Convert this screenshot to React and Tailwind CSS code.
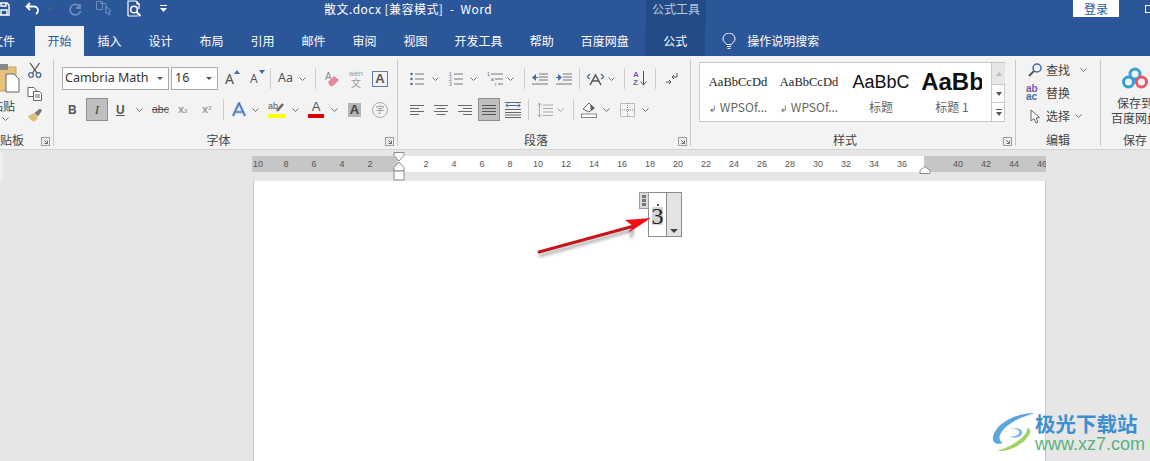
import React from "react";

const CJK = "font-['Noto_Sans_CJK_SC','Noto_Sans',sans-serif]";

const Chev = ({ className = "" }) => (
  <svg width="7" height="4" viewBox="0 0 7 4" className={"shrink-0 " + className} fill="none" stroke="#707070" strokeWidth="1"><path d="M.5.5 3.5 3.5 6.5.5" /></svg>
);
const Sep = ({ className = "" }) => <div className={"w-px h-[21px] bg-[#cfcfcf] shrink-0 " + className} />;
const Launcher = () => (
  <svg width="9" height="9" viewBox="0 0 9 9" className="absolute right-[3px] bottom-[0px]" fill="none" stroke="#6f6f6f"><path d="M.5 8.500V.5h8v8z" stroke="#9a9a9a" /><path d="M3 3l3.500 3.500M6.500 3.500v3h-3" /></svg>
);
const Lines = ({ w = 14, rows, className = "", color = "#6a6a6a" }) => (
  <svg width={w} height="14" viewBox={`0 0 ${w} 14`} className={"shrink-0 " + className} stroke={color} fill="none">
    {rows.map((r, i) => <path key={i} d={`M${r[0]} ${2.5 + i * 3}H${r[1]}`} />)}
  </svg>
);
const Label = ({ children, className = "" }) => (
  <div className={"mt-[12px] h-[13px] flex items-center justify-center text-[12px] leading-none text-[#444] whitespace-nowrap " + className}>{children}</div>
);
const Tab = ({ children, className = "" }) => (
  <div className={"h-full px-[13.5px] flex items-center text-[12px] text-white whitespace-nowrap shrink-0 " + className}>{children}</div>
);

const RULER_MID = [2, 4, 6, 8, 10, 12, 14, 16, 18, 20, 22, 24, 26, 28, 30, 32, 34, 36];

const Cell = ({ n }) => <div className="w-[28px] shrink-0 text-center">{n}</div>;

const StyleItem = ({ preview, name, className = "", arrow }) => (
  <div className={"flex flex-col items-center overflow-hidden shrink-0 " + className}>
    <div className="h-[30px] mt-[4px] flex items-center self-stretch justify-center whitespace-nowrap">{preview}</div>
    <div className="mt-[2px] text-[12px] leading-[16px] text-[#666] whitespace-nowrap">{arrow && <span className="text-[9px] mr-[3px]">↲</span>}{name}</div>
  </div>
);

export default function App() {
  return (
    <div className={"w-[1150px] h-[461px] overflow-hidden bg-[#e6e6e6] relative " + CJK}>
      {/* Title bar */}
      <div className="flex h-[26px] bg-[#2b579a]">
        <div className="w-[646px] flex items-start shrink-0 text-white">
          <svg width="10" height="14" viewBox="0 0 10 14" className="mt-[2px]" fill="none" stroke="#fff" strokeWidth="1.4"><path d="M-2 1h9l2 2v10H-2zM1 13V8h6v5M1 1v3h5V1" /></svg>
          <svg width="15" height="13" viewBox="0 0 15 13" className="ml-[15px] mt-[2px]" fill="none" stroke="#fff" strokeWidth="1.8"><path d="M5 1 1.500 4.500 5 8M2 4.500h7a4 4 0 0 1 4 4c0 1.500-.7 2.500-2 3.500" /></svg>
          <Chev className="ml-[7px] mt-[7px] opacity-80" />
          <svg width="14" height="13" viewBox="0 0 14 13" className="ml-[14px] mt-[3px]" fill="none" stroke="#6f8dbc" strokeWidth="1.8"><path d="M12 1v4H8M12 4A5.300 5.300 0 1 0 12.500 8" /></svg>
          <svg width="17" height="17" viewBox="0 0 17 17" className="ml-[14px] mt-[0px]" fill="none" stroke="#6f8dbc"><path d="M.5 1.500h6v8h-6zM4 3.500h6v7M10 6l5 5-2 .5 1 3-1.500.5-1-3-1.500 1.500z" /></svg>
          <svg width="16" height="17" viewBox="0 0 16 17" className="ml-[14px] mt-[0px]" fill="none" stroke="#fff" strokeWidth="1.2"><path d="M1 16V1h8l3 3v5M10 1v3h3M1 16h10" /><circle cx="7" cy="9.500" r="3.300" strokeWidth="1.500" /><path d="M9.500 12l4 4" strokeWidth="2" /></svg>
          <svg width="7" height="9" viewBox="0 0 7 9" className="ml-[17px] mt-[5px]" fill="#fff"><path d="M0 0h7v1H0zM0 3h7L3.500 7z" /></svg>
          <div className="ml-[157px] mt-[0px] text-[12px] leading-[18px] text-white tracking-[0.45px] whitespace-nowrap">散文.docx [兼容模式]&nbsp; -&nbsp; Word</div>
        </div>
        <div className="w-[60px] bg-[#234b85] text-[12px] leading-[17px] text-[#b9c8df] text-center shrink-0">公式工具</div>
        <div className="flex-1 flex items-start">
          <div className="ml-[367px] w-[46px] h-[17px] bg-white text-[12px] leading-[17px] text-[#2b579a] text-center">登录</div>
          <div className="ml-[26px] mt-[5px] w-[8px] h-[8px] border border-white shrink-0" />
        </div>
      </div>
      {/* Tabs */}
      <div className="flex h-[30px] bg-[#2b579a] items-stretch">
        <div className="-ml-[10px] w-[45px] pr-[20px] h-full flex items-center justify-end text-[12px] text-white whitespace-nowrap shrink-0">文件</div>
        <div className="w-[49px] bg-[#f3f3f3] text-[#2b579a] text-[12px] flex items-center justify-center shrink-0">开始</div>
        <Tab>插入</Tab><Tab>设计</Tab><Tab>布局</Tab><Tab>引用</Tab><Tab>邮件</Tab><Tab>审阅</Tab><Tab>视图</Tab><Tab>开发工具</Tab><Tab>帮助</Tab><Tab>百度网盘</Tab>
        <div className="w-[60px] bg-[#234b85] text-white text-[12px] flex items-center justify-center shrink-0 ml-[3px]">公式</div>
        <svg width="14" height="17" viewBox="0 0 14 17" className="ml-[17px] mt-[7px]" fill="none" stroke="#fff"><path d="M4.500 11.500C3.500 9.500 1 8.500 1 6a6 6 0 0 1 12 0c0 2.500-2.500 3.500-3.500 5.500zM5 13.500h4M5.500 15.500h3" /></svg>
        <div className="ml-[11px] flex items-center text-[12px] text-white whitespace-nowrap">操作说明搜索</div>
      </div>
      {/* Ribbon */}
      <div className="flex h-[94px] pt-[4px] bg-[#f3f3f3] border-b border-[#d4d4d4]">
        {/* Clipboard */}
        <div className="w-[54px] h-[86px] border-r border-[#c8c8c8] shrink-0 relative">
          <div className="flex">
            <div className="w-[25px] shrink-0 overflow-hidden">
              <svg width="20" height="30" viewBox="0 0 20 30" className="mt-[4px]">
                <rect x="-6" y="3" width="22" height="24" fill="#e7c27d" stroke="#c9a35d" />
                <rect x="-1" y="0" width="9" height="6" fill="#8a8a8a" />
                <path d="M6 10h8l5 5v13H6z" fill="#fff" stroke="#666" />
              </svg>
              <div className="-ml-[9px] mt-[4px] text-[12px] leading-[16px] text-[#444] whitespace-nowrap">粘贴</div>
              <Chev className="ml-[2px] mt-[3px]" />
            </div>
            <div className="ml-[2px] flex flex-col">
              <svg width="16" height="16" viewBox="0 0 16 16" className="mt-[2px]" fill="none" stroke="#4f6a8c" strokeWidth="1.300"><circle cx="4" cy="13" r="2.300" /><circle cx="11.500" cy="13" r="2.300" /><path d="M3 1l7 10M12.500 1l-7 10" stroke="#555" /></svg>
              <svg width="16" height="14" viewBox="0 0 16 14" className="mt-[9px]" fill="#fff" stroke="#666"><path d="M1 .5h6l2 2v7H1z" /><path d="M6.500 4.500h6l2 2v7h-8z" /><path d="M8 8h5M8 10h5" /></svg>
              <svg width="16" height="15" viewBox="0 0 16 15" className="mt-[7px]"><path d="M1 8 7 5l4 5-4 4c-2-1-5-3-6-6z" fill="#e2bd78" /><path d="M7.500 5 13 .5l2 2-4 6z" fill="#777" /></svg>
            </div>
          </div>
          <div className="absolute left-0 bottom-0 text-[12px] leading-[13px] text-[#444] h-[13px] w-[24px] whitespace-nowrap">贴板</div>
          <Launcher />
        </div>
        {/* Font */}
        <div className="w-[344px] h-[86px] border-r border-[#c8c8c8] shrink-0 relative pt-[7px]">
          <div className="flex items-center h-[23px]">
            <div className="ml-[8px] w-[107px] h-[23px] bg-white border border-[#ababab] flex items-center pl-[2px] pr-[5px] justify-between font-['Noto_Sans',sans-serif] text-[12.500px] text-[#333] shrink-0">
              <span className="whitespace-nowrap">Cambria Math</span>
              <svg width="6" height="4" viewBox="0 0 6 4" fill="#555"><path d="M0 0h6L3 3z" /></svg>
            </div>
            <div className="ml-[2px] w-[47px] h-[23px] bg-white border border-[#ababab] flex items-center pl-[3px] pr-[5px] justify-between font-['Noto_Sans',sans-serif] text-[12.500px] text-[#333] shrink-0">
              <span>16</span>
              <svg width="6" height="4" viewBox="0 0 6 4" fill="#555"><path d="M0 0h6L3 3z" /></svg>
            </div>
            <div className="ml-[7px] w-[15px] text-[14px] leading-none text-[#555] relative font-['Noto_Sans',sans-serif] shrink-0">A<span className="absolute right-0 -top-[2px] w-0 h-0 border-x-[3px] border-x-transparent border-b-[4px] border-b-[#3f6cab]" /></div>
            <div className="ml-[10px] w-[15px] text-[12px] leading-none text-[#555] relative font-['Noto_Sans',sans-serif] shrink-0">A<span className="absolute right-0 -top-[3px] w-0 h-0 border-x-[3px] border-x-transparent border-t-[4px] border-t-[#3f6cab]" /></div>
            <Sep className="ml-[5px]" />
            <div className="ml-[7px] w-[17px] text-[12.500px] leading-none text-[#555] font-['Noto_Sans',sans-serif] shrink-0">Aa</div>
            <Chev className="ml-[4px]" />
            <Sep className="ml-[9px]" />
            <svg width="15" height="16" viewBox="0 0 15 16" className="ml-[9px] shrink-0"><text x="0" y="9" fontSize="10" fill="#8a8a8a" fontFamily="Liberation Sans">A</text><path d="M3 11l6-6 5 4-6 6H5z" fill="#e58a9c" /></svg>
            <div className="ml-[7px] w-[18px] text-center text-[#9a9a9a] shrink-0 flex flex-col items-center"><span className="text-[7.500px] leading-[8px] font-['Liberation_Sans']">wén</span><span className="text-[10px] leading-[10px]">文</span></div>
            <div className="ml-[7px] w-[16px] h-[16px] border border-[#5b7da8] text-[13px] leading-[14px] text-center font-bold text-[#555] font-['Liberation_Sans'] shrink-0">A</div>
          </div>
          <div className="flex items-center h-[23px] mt-[8px] text-[#555]">
            <div className="ml-[14px] w-[8px] text-[12px] font-bold font-['Liberation_Sans'] leading-none shrink-0">B</div>
            <div className="ml-[10px] w-[22px] h-[23px] bg-[#bfbfbf] border border-[#8f8f8f] flex items-center justify-center text-[13px] italic font-['Liberation_Serif'] shrink-0 text-[#444]">I</div>
            <div className="ml-[8px] w-[9px] text-[12px] font-bold font-['Liberation_Sans'] leading-none underline shrink-0">U</div>
            <Chev className="ml-[11px]" />
            <div className="ml-[9px] w-[16px] text-[10.500px] font-['Liberation_Sans'] leading-none line-through shrink-0">abc</div>
            <div className="ml-[10px] w-[12px] text-[11px] font-bold text-[#9c9c9c] font-['Liberation_Sans'] leading-none shrink-0">x<span className="text-[6px]">2</span></div>
            <div className="ml-[12px] w-[12px] text-[11px] font-bold text-[#9c9c9c] font-['Liberation_Sans'] leading-none shrink-0">x<sup className="text-[6px]">2</sup></div>
            <Sep className="ml-[9px]" />
            <svg width="14" height="15" viewBox="0 0 14 15" className="ml-[8px] shrink-0" fill="none"><path d="M1 14 7 1l6 13M3.500 10h7" stroke="#a9c7e8" strokeWidth="3" /><path d="M1 14 7 1l6 13M3.500 10h7" stroke="#3f6cab" strokeWidth="1.200" /></svg>
            <Chev className="ml-[6px]" />
            <svg width="17" height="17" viewBox="0 0 17 17" className="ml-[9px] shrink-0"><text x="0" y="8" fontSize="9" fill="#555" fontFamily="Liberation Sans">ab</text><path d="M9 10l6-7" stroke="#666" strokeWidth="2.500" /><rect y="13" width="17" height="4" fill="#ffff00" /></svg>
            <Chev className="ml-[7px]" />
            <div className="ml-[9px] w-[16px] flex flex-col items-center shrink-0"><span className="text-[13px] leading-[12px] font-['Liberation_Sans']">A</span><span className="block mt-[1px] w-[16px] h-[4px] bg-[#d00]" /></div>
            <Chev className="ml-[7px]" />
            <div className="ml-[10px] w-[13px] h-[14px] bg-[#b5b5b5] text-[13px] leading-[14px] text-center font-bold font-['Liberation_Sans'] shrink-0 text-[#444]">A</div>
            <div className="ml-[11px] w-[16px] h-[16px] rounded-full border border-[#aaa] text-[9px] leading-[14px] text-center text-[#999] shrink-0">字</div>
          </div>
          <Label className="pr-[14px]">字体</Label>
          <Launcher />
        </div>
        {/* Paragraph */}
        <div className="w-[293px] h-[86px] border-r border-[#c8c8c8] shrink-0 relative pt-[7px]">
          <div className="flex items-center h-[23px]">
            <svg width="14" height="14" viewBox="0 0 14 14" className="ml-[12px] shrink-0"><g fill="#4b6f9f"><circle cx="1.500" cy="2" r="1.300" /><circle cx="1.500" cy="7" r="1.300" /><circle cx="1.500" cy="12" r="1.300" /></g><path d="M5 2h9M5 7h9M5 12h9" stroke="#777" /></svg>
            <Chev className="ml-[8px]" />
            <svg width="14" height="14" viewBox="0 0 14 14" className="ml-[10px] shrink-0"><g fill="#4b6f9f" fontSize="5" fontFamily="Liberation Sans"><text x="0" y="4">1</text><text x="0" y="9">2</text><text x="0" y="14">3</text></g><path d="M5 2h9M5 7h9M5 12h9" stroke="#777" /></svg>
            <Chev className="ml-[7px]" />
            <svg width="16" height="14" viewBox="0 0 16 14" className="ml-[10px] shrink-0"><g fill="#4b6f9f" fontSize="5" fontFamily="Liberation Sans"><text x="0" y="4">1</text><text x="4" y="9">a</text><text x="8" y="14">i</text></g><path d="M4 2h12M8 7h8M11 12h5" stroke="#777" /></svg>
            <Chev className="ml-[4px]" />
            <Sep className="ml-[10px]" />
            <svg width="16" height="12" viewBox="0 0 16 12" className="ml-[7px] shrink-0"><path d="M7 1h9M7 4h9M7 7h9M0 11h16" stroke="#777" /><path d="M0 4.500 4 1v7z" fill="#3f6cab" /><path d="M3 4h3v1H3z" fill="#3f6cab" /></svg>
            <svg width="16" height="12" viewBox="0 0 16 12" className="ml-[8px] shrink-0"><path d="M7 1h9M7 4h9M7 7h9M0 11h16" stroke="#777" /><path d="M6 4.500 2 1v7z" fill="#3f6cab" /><path d="M0 4h3v1H0z" fill="#3f6cab" /></svg>
            <Sep className="ml-[7px]" />
            <svg width="19" height="14" viewBox="0 0 19 14" className="ml-[6px] shrink-0" fill="none"><path d="M4 13 9.500 3 15 13M6 9h7" stroke="#555" strokeWidth="1.500" /><path d="M1 5l3-3M1 5l3 2M18 5l-3-3M18 5l-3 2" stroke="#3f6cab" strokeWidth="1.200" /></svg>
            <Chev className="ml-[3px]" />
            <Sep className="ml-[9px]" />
            <div className="ml-[8px] w-[15px] flex items-center shrink-0">
              <div className="flex flex-col text-[8px] leading-[8px] font-bold text-[#7a5aa8] font-['Liberation_Sans']"><span>A</span><span>Z</span></div>
              <svg width="7" height="15" viewBox="0 0 7 15" className="ml-[1px]" fill="none" stroke="#555"><path d="M3.500 0v14M.5 10.500l3 3.500 3-3.500" /></svg>
            </div>
            <Sep className="ml-[7px]" />
            <svg width="13" height="13" viewBox="0 0 13 13" className="ml-[9px] shrink-0" fill="none" stroke="#555"><path d="M12 1v4H7M7 5l2-2M7 5l2 2" /><path d="M1 10h5M4 8l2 2-2 2" /></svg>
          </div>
          <div className="flex items-center h-[23px] mt-[8px]">
            <Lines rows={[[0, 14], [0, 9], [0, 14], [0, 9]]} className="ml-[12px]" />
            <Lines rows={[[0, 14], [2.5, 11.5], [0, 14], [2.5, 11.5]]} className="ml-[10px]" />
            <Lines rows={[[0, 14], [5, 14], [0, 14], [5, 14]]} className="ml-[10px]" />
            <div className="ml-[6px] w-[22px] h-[23px] bg-[#bfbfbf] border border-[#8f8f8f] flex items-center justify-center shrink-0"><Lines w={14} rows={[[0, 14], [0, 14], [0, 14], [0, 14]]} color="#555" /></div>
            <svg width="16" height="16" viewBox="0 0 16 16" className="ml-[5px] shrink-0" fill="none"><path d="M0 .5h16M0 15.500h16M0 13h16M0 10.500h16M0 7.500h16" stroke="#666" /><path d="M1 3.500h14" stroke="#3f6cab" /><path d="M3 1.500 1 3.500l2 2M13 1.500l2 2-2 2" stroke="#3f6cab" /></svg>
            <Sep className="ml-[7px]" />
            <svg width="16" height="16" viewBox="0 0 16 16" className="ml-[8px] shrink-0" fill="none" stroke="#aaa"><path d="M6 3h10M6 6.500h10M6 10h10M6 13.500h10M2.500 1v14M.5 3.500l2-2.500 2 2.500M.5 12.500l2 2.500 2-2.500" /></svg>
            <Chev className="ml-[4px] opacity-60" />
            <Sep className="ml-[9px]" />
            <svg width="16" height="17" viewBox="0 0 16 17" className="ml-[7px] shrink-0" fill="none"><path d="M2 8l6-6 5 5-5 4z" stroke="#666" fill="#fff" /><path d="M9 3l5 4-4 3" fill="#5d5d5d" /><rect x=".5" y="13" width="15" height="3.500" stroke="#888" fill="#fff" /></svg>
            <Chev className="ml-[6px]" />
            <svg width="15" height="14" viewBox="0 0 15 14" className="ml-[10px] shrink-0" fill="none" stroke="#888" strokeDasharray="1 1"><rect x=".5" y=".5" width="14" height="13" /><path d="M7.500 0v14M0 7h15" /></svg>
            <Chev className="ml-[7px]" />
          </div>
          <Label className="pr-[16px]">段落</Label>
          <Launcher />
        </div>
        {/* Styles */}
        <div className="w-[325px] h-[86px] border-r border-[#c8c8c8] shrink-0 relative pt-[2px]">
          <div className="ml-[8px] w-[306px] h-[60px] bg-white border border-[#c9c9c9] flex">
            <div className="w-[291px] flex overflow-hidden pl-[8px] shrink-0">
              <StyleItem className="w-[60px]" arrow name="WPSOf..." preview={<span className="font-['Liberation_Serif'] text-[12.500px] text-[#222]">AaBbCcDd</span>} />
              <StyleItem className="w-[60px] ml-[11px]" arrow name="WPSOf..." preview={<span className="font-['Liberation_Serif'] text-[12.500px] text-[#222]">AaBbCcDd</span>} />
              <StyleItem className="w-[60px] ml-[12px]" name="标题" preview={<span className="font-['Liberation_Sans'] text-[18px] text-[#111]">AaBbC</span>} />
              <StyleItem className="w-[60px] ml-[11px]" name="标题 1" preview={<span className="font-['Liberation_Sans'] font-bold text-[24px] text-[#111] self-center ml-[1px]">AaBb</span>} />
            </div>
            <div className="w-[14px] flex flex-col border-l border-[#c9c9c9] shrink-0">
              <div className="h-[21px] bg-[#e6e6e6] flex items-center justify-center"><span className="w-0 h-0 border-x-[3px] border-x-transparent border-b-[4px] border-b-[#bbb]" /></div>
              <div className="h-[19px] border-y border-[#c9c9c9] flex items-center justify-center"><span className="w-0 h-0 border-x-[3px] border-x-transparent border-t-[4px] border-t-[#555]" /></div>
              <div className="flex-1 flex flex-col items-center justify-center gap-[2px]"><span className="w-[6px] h-px bg-[#555]" /><span className="w-0 h-0 border-x-[3px] border-x-transparent border-t-[4px] border-t-[#555]" /></div>
            </div>
          </div>
          <Label className="pr-[16px] !mt-[11px]">样式</Label>
          <Launcher />
        </div>
        {/* Edit */}
        <div className="w-[85px] h-[86px] border-r border-[#c8c8c8] shrink-0">
          <div className="flex flex-col gap-[3px] text-[12px] text-[#444]">
            <div className="flex items-center h-[20px]">
              <svg width="14" height="14" viewBox="0 0 14 14" className="ml-[12px]" fill="none"><circle cx="9" cy="5" r="4" stroke="#3f6cab" strokeWidth="1.500" /><path d="M6 8l-5 5" stroke="#555" strokeWidth="2" /></svg>
              <span className="ml-[4px]">查找</span><Chev className="ml-[10px]" />
            </div>
            <div className="flex items-center h-[20px]">
              <div className="ml-[10px] w-[16px] h-[16px] text-[10px] leading-[8px] font-bold font-['Liberation_Sans'] text-[#7a5aa8]">ab<br /><span className="text-[#3f6cab]">ac</span></div>
              <span className="ml-[4px]">替换</span>
            </div>
            <div className="flex items-center h-[20px]">
              <svg width="10" height="15" viewBox="0 0 10 15" className="ml-[14px]" fill="#fff" stroke="#666"><path d="M1 1v11l3-2.500 2 4.500 2-1-2-4 3.500-.5z" /></svg>
              <span className="ml-[6px]">选择</span><Chev className="ml-[5px]" />
            </div>
          </div>
          <Label className="!mt-[7px]">编辑</Label>
        </div>
        {/* Save */}
        <div className="w-[68px] h-[86px] shrink-0 flex flex-col items-center">
          <svg width="26" height="22" viewBox="0 0 26 22" className="mt-[7px] shrink-0" fill="none"><circle cx="13" cy="7" r="5" stroke="#3aa0dc" strokeWidth="3" /><circle cx="6.500" cy="15" r="5" stroke="#2f9fd8" strokeWidth="3" /><circle cx="19.500" cy="15" r="5" stroke="#e2596c" strokeWidth="3" /></svg>
          <div className="mt-[6px] text-[12px] leading-[15px] text-[#444] text-center whitespace-nowrap">保存到<br />百度网盘</div>
          <Label className="!mt-[8px]">保存</Label>
        </div>
      </div>
      {/* Document */}
      <div className="pt-[6px] relative">
        <div className="ml-[252px] w-[794px] h-[16px] flex text-[9px] leading-[16px] text-[#555] font-['Liberation_Sans']">
          <div className="w-[146px] bg-[#c6c6c6] flex justify-end pr-[14px] overflow-hidden shrink-0">
            {[10, 8, 6, 4, 2].map((n) => <Cell key={n} n={n} />)}
          </div>
          <div className="w-[526px] bg-white flex pl-[14px] shrink-0">
            {RULER_MID.map((n) => <Cell key={n} n={n} />)}
          </div>
          <div className="w-[122px] bg-[#c6c6c6] flex pl-[20px] overflow-hidden shrink-0">
            {[40, 42, 44, 46].map((n) => <Cell key={n} n={n} />)}
          </div>
        </div>
        <div className="ml-[253px] mt-[9px] w-[793px] h-[300px] bg-white border-x border-[#c6c6c6] pt-[11px]">
          <div className="ml-[394px] w-[34px] h-[45px] border border-[#8c8c8c] flex relative">
            <div className="absolute -left-[10px] -top-px w-[10px] h-[17px] bg-[#dcdcdc] border border-[#9a9a9a] flex flex-col items-center justify-center gap-[1px]">
              <span className="w-[4px] h-[3px] bg-[#777]" /><span className="w-[4px] h-[3px] bg-[#777]" /><span className="w-[4px] h-[3px] bg-[#777]" />
            </div>
            <div className="w-[17px] bg-white flex flex-col items-center shrink-0">
              <span className="mt-[11px] w-[2px] h-[2px] rounded-full bg-[#222]" />
              <span className="mt-[1px] w-[11px] h-[18px] bg-[#d4d4d4] text-[24px] leading-[18px] text-center text-[#222] font-['Liberation_Serif'] flex justify-center">3</span>
            </div>
            <div className="flex-1 bg-[#e3e3e3] border-l border-[#8c8c8c] flex items-end justify-center pb-[3px]"><span className="w-0 h-0 border-x-[4px] border-x-transparent border-t-[4px] border-t-[#444]" /></div>
          </div>
        </div>
        {/* ruler markers */}
        <svg width="14" height="30" viewBox="0 0 14 30" className="absolute left-[392px] top-[2px]" fill="#fff" stroke="#8a8a8a"><path d="M2 .5h10v3L7 9 2 3.500z" /><path d="M7 10l5 5.500V19H2v-3.500z" /><path d="M2 19h10v9H2z" /></svg>
        <svg width="12" height="8" viewBox="0 0 12 8" className="absolute left-[919px] top-[16px]" fill="#fff" stroke="#8a8a8a"><path d="M6 .5l5 4v3H1v-3z" /></svg>
      </div>
      <div className="absolute left-0 top-[152px] w-[3px] h-[28px] bg-[#f0f0f0]" />
      {/* Annotation arrow */}
      <svg width="130" height="50" viewBox="0 0 130 50" className="absolute left-[530px] top-[212px]">
        <path d="M9 44 103 18l-2 8" stroke="#000" strokeOpacity=".3" strokeWidth="3" fill="none" className="blur-[1.500px]" />
        <path d="M9 40 104 14" stroke="#c4161c" strokeWidth="3" strokeLinecap="round" />
        <path d="M121 6 95 8 103 14 98 21z" fill="#ee1015" />
      </svg>
      {/* Watermark */}
      <div className="absolute left-[992px] top-[410px] flex items-center">
        <svg width="43" height="40" viewBox="0 0 43 40" fill="none" className="shrink-0">
          <path d="M43 2C24 2 4 12 1 26c-1 6 4 8 10 6C5 29 7 22 15 15 22 9 33 5 43 2z" fill="#5aa7e0" />
          <path d="M11 22c7-6 17-5 16 0-1 3-6 4-10 3 5 3 11 2 13-2 2-7-11-8-19-1z" fill="#7bb9e6" />
          <path d="M5 40c14 1 29-8 33-18 1-4-1-5-3-5 1 7-13 18-30 23z" fill="#a4d468" />
        </svg>
        <div className="flex flex-col">
          <div className="text-[20.500px] leading-[26px] font-bold text-[#3d8fd0] whitespace-nowrap">极光下载站</div>
          <div className="text-[18px] leading-[16px] text-[#59b37e] font-['Liberation_Sans'] whitespace-nowrap">www.xz7.com</div>
        </div>
      </div>
    </div>
  );
}
